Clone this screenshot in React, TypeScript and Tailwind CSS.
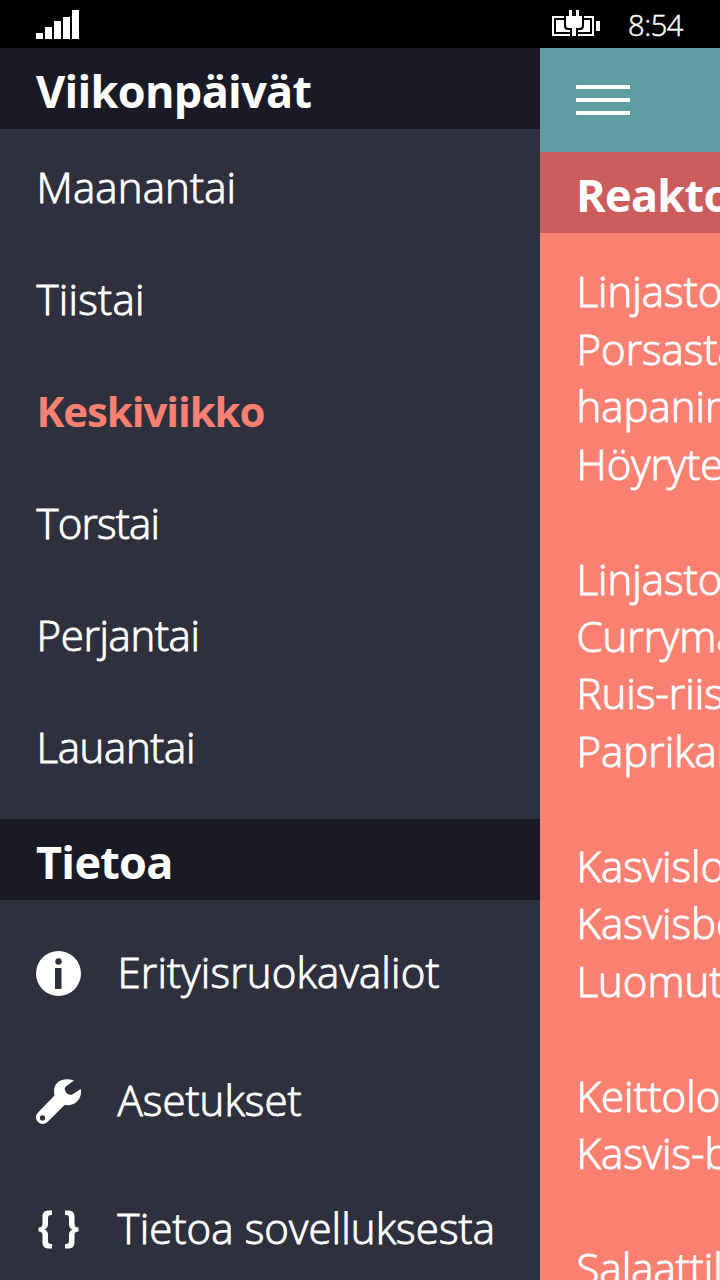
import React from "react";

const days = [
  { name: "Maanantai", cls: "tracking-[0.15px]" },
  { name: "Tiistai", cls: "tracking-[0.25px]" },
  { name: "Keskiviikko", cls: "font-bold tracking-[-1.1px] text-[#fa8072] [-webkit-text-stroke:0]" },
  { name: "Torstai", cls: "tracking-[-0.8px]" },
  { name: "Perjantai", cls: "tracking-[-0.35px]" },
  { name: "Lauantai", cls: "tracking-[-0.35px]" },
];

const menu = [
  "Linjasto 1",
  "Porsasta",
  "hapanimelä",
  "Höyrytetty",
  "",
  "Linjasto 2",
  "Currymaustettu",
  "Ruis-riisi",
  "Paprikankastike",
  "",
  "Kasvislounas",
  "Kasvisbolognese",
  "Luomutagliatelle",
  "",
  "Keittolounas",
  "Kasvis-borssi",
  "",
  "Salaattilounas",
];

function SignalIcon() {
  return (
    <svg width="43" height="29" viewBox="0 0 43 29" fill="#fff" shapeRendering="crispEdges">
      <rect x="0" y="23" width="7" height="6" />
      <rect x="9" y="17" width="7" height="12" />
      <rect x="18" y="11" width="7" height="18" />
      <rect x="27" y="7" width="7" height="22" />
      <rect x="36" y="0" width="7" height="29" />
    </svg>
  );
}

function BatteryIcon() {
  return (
    <svg width="48" height="26" viewBox="0 0 48 26" fill="#fff">
      <path fillRule="evenodd" d="M0 6h42v20H0zM2 8v16h38V8z" />
      <path d="M4 10h34v12H4zM44 11h4v10h-4z" />
      <path fill="#000" d="M12 6h20v10q0 4-4 4h-2v6h-8v-6h-2q-4 0-4-4z" />
      <path d="M17 0h3v6h4V0h3v6h3v9q0 3-3 3h-3v8h-4v-8h-3q-3 0-3-3V6h3z" />
      <path d="M12 20h6v2h-6zM26 20h6v2h-6zM12 24h6v2h-6zM26 24h6v2h-6z" />
    </svg>
  );
}

function InfoIcon() {
  return (
    <svg width="45" height="45" viewBox="0 0 45 45">
      <circle cx="22.5" cy="22.5" r="22.5" fill="#fff" />
      <circle cx="22.5" cy="10.5" r="3.2" fill="#2f303d" />
      <rect x="19" y="17" width="6.5" height="21" fill="#2f303d" />
    </svg>
  );
}

function WrenchIcon() {
  return (
    <svg width="45" height="45" viewBox="0 0 45 45" fill="#fff">
      <path
        fillRule="evenodd"
        d="M38 1.500C32-.7 25-.3 21 4c-3 3.500-3.500 7-2.500 12.500L2 33.500c-3 3-2.500 7 0 9.500s6.500 2.500 9.500 0L28.500 26c5 .5 9.500-.3 12.500-3.500 3.500-3.500 4.500-7.500 3.800-12.500l-8 5.200c-3 1.300-5.500.3-7-2.200-1.500-2.700-1.500-4.500.7-6zM6.500 36.300a2.600 2.600 0 1 0 0 5.200a2.600 2.600 0 1 0 0-5.200z"
      />
    </svg>
  );
}

function BracesIcon() {
  return (
    <svg width="45" height="45" viewBox="0 0 45 45" fill="#fff">
      <path d="M16 3.500V8h-1c-2.300 0-3 1-3 3.500V17c0 3-1.200 4.700-3.500 5.500 2.300.8 3.500 2.500 3.500 5.500v5.500c0 2.500.7 3.500 3 3.500h1v4.500h-3c-4.500 0-6.500-2-6.500-6.500v-6.500c0-2.700-1-3.800-4-4v-4c3-.2 4-1.300 4-4V10c0-4.500 2-6.500 6.500-6.500z" />
      <path d="M29 3.500V8h1c2.300 0 3 1 3 3.500V17c0 3 1.200 4.700 3.500 5.500-2.300.8-3.500 2.500-3.500 5.500v5.500c0 2.500-.7 3.500-3 3.500h-1v4.500h3c4.500 0 6.500-2 6.500-6.500v-6.500c0-2.700 1-3.800 4-4v-4c-3-.2-4-1.300-4-4V10c0-4.500-2-6.500-6.500-6.500z" />
    </svg>
  );
}

const info = [
  { name: "Erityisruokavaliot", Icon: InfoIcon, cls: "tracking-[0.18px]" },
  { name: "Asetukset", Icon: WrenchIcon, cls: "tracking-[0.05px]" },
  { name: "Tietoa sovelluksesta", Icon: BracesIcon, cls: "tracking-[0.1px]" },
];

export default function App() {
  return (
    <div className="flex h-[1280px] w-[720px] flex-col overflow-hidden bg-black font-['Open_Sans',sans-serif] text-[42px] font-light text-white [-webkit-text-stroke:0.95px]">
      <header className="flex h-12 shrink-0 items-start justify-between pl-9 pr-9">
        <div className="pt-[10px]"><SignalIcon /></div>
        <div className="flex">
          <div className="pt-[10px]"><BatteryIcon /></div>
          <span className="ml-7 h-12 w-14 whitespace-nowrap text-[29px] leading-[50px] tracking-[-0.4px] [-webkit-text-stroke:0.5px]">8:54</span>
        </div>
      </header>
      <div className="flex min-h-0 flex-1">
        <nav className="flex w-[540px] shrink-0 flex-col overflow-hidden bg-[#2f303d]">
          <h2 className="h-[81px] shrink-0 bg-[#191a25] pl-9 text-[45px] font-bold leading-[86px] tracking-[-0.7px] [-webkit-text-stroke:0]">Viikonpäivät</h2>
          <ul className="h-[690px] shrink-0 pl-[36.5px] pt-0.5">
            {days.map((d) => (
              <li key={d.name} className="h-28 whitespace-nowrap leading-[112px]">
                <span className={d.cls}>{d.name}</span>
              </li>
            ))}
          </ul>
          <h2 className="h-[81px] shrink-0 bg-[#191a25] pl-9 text-[45px] font-bold leading-[86px] tracking-[-0.7px] [-webkit-text-stroke:0]">Tietoa</h2>
          <ul className="shrink-0 pl-9 pt-[9px]">
            {info.map(({ name, Icon, cls }) => (
              <li key={name} className="flex h-32 items-center gap-[36.5px] whitespace-nowrap">
                <Icon />
                <span className="pb-[3px]">
                  <span className={cls}>{name}</span>
                </span>
              </li>
            ))}
          </ul>
        </nav>
        <main className="flex w-[180px] flex-col overflow-hidden bg-[#fa8072]">
          <div className="flex h-[104px] shrink-0 flex-col gap-[9px] bg-[#5f9ea0] pl-9 pt-[37px]">
            <div className="h-1 w-[54px] bg-white" />
            <div className="h-1 w-[54px] bg-white" />
            <div className="h-1 w-[54px] bg-white" />
          </div>
          <h1 className="h-[81px] shrink-0 whitespace-nowrap bg-[#cd5c5c] pl-9 text-[45px] font-bold leading-[86px] tracking-[-0.7px] [-webkit-text-stroke:0]">Reaktori</h1>
          <div className="pl-[36.5px] pt-[29.3px] leading-[57.46px]">
            {menu.map((line, i) => (
              <p key={i} className="h-[57.46px] whitespace-nowrap">{line}</p>
            ))}
          </div>
        </main>
      </div>
    </div>
  );
}
